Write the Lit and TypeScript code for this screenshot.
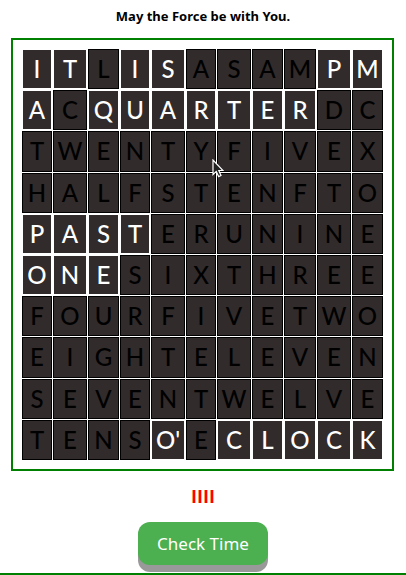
import { LitElement, html, css } from "lit";
import { customElement } from "lit/decorators.js";
import { classMap } from "lit/directives/class-map.js";

// One string per row; "*" after a letter marks a lit tile.
const ROWS = [
  "I* T* L I* S* A S A M P* M*",
  "A* C Q* U* A* R* T* E* R* D C",
  "T W E N T Y F I V E X",
  "H A L F S T E N F T O",
  "P* A* S* T* E R U N I N E",
  "O* N* E* S I X T H R E E",
  "F O U R F I V E T W O",
  "E I G H T E L E V E N",
  "S E V E N T W E L V E",
  "T E N S O'* E C* L* O* C* K*",
].map((row) =>
  row.split(" ").map((t) => ({ text: t.replace("*", ""), lit: t.endsWith("*") }))
);

@customElement("word-clock")
export class WordClock extends LitElement {
  static styles = css`
    :host {
      display: block;
      position: relative;
      border: 2px solid #008000;
      padding: 8px;
    }
    .grid {
      width: 100%;
      height: 413px;
      table-layout: fixed;
      border-collapse: separate;
      border-spacing: 1px;
    }
    .medium { width: 31px; }
    .wide { width: 34px; }
    .narrow { width: 30px; }
    .broad { width: 32px; }
    .tile {
      box-sizing: border-box;
      padding: 0;
      border: 1px solid #000;
      background: #312b2b;
      color: #000;
      font: 500 24px/30px Lato, sans-serif;
      text-align: center;
      vertical-align: middle;
    }
    .lit {
      border-color: #fff;
      color: #fff;
    }
    .pointer {
      position: absolute;
      left: 199px;
      top: 119px;
      width: 12px;
      height: 19px;
    }
  `;

  render() {
    const cols = ["narrow", "wide", "medium", "narrow", "wide", "narrow", "wide", "medium", "broad", "wide", "medium"];
    return html`
      <table class="grid">
        <colgroup>${cols.map((c) => html`<col class=${c} />`)}</colgroup>
        <tbody>
          ${ROWS.map(
            (row) => html`<tr>
              ${row.map((t) => html`<td class=${classMap({ tile: true, lit: t.lit })}>${t.text}</td>`)}
            </tr>`
          )}
        </tbody>
      </table>
      <svg class="pointer" viewBox="0 0 12 19" aria-hidden="true">
        <path d="M1 1V15.5L4.3 12.4L6.6 17.6L9 16.5L6.8 11.5H11Z" fill="#222" stroke="#fff" stroke-width="1.2" />
      </svg>
    `;
  }
}

@customElement("app-root")
export class AppRoot extends LitElement {
  static styles = css`
    :host {
      display: block;
      background: #fff;
      font-family: "Noto Sans", sans-serif;
    }
    .page {
      display: flex;
      flex-direction: column;
      border-bottom: 2px solid #008000;
    }
    .motto {
      margin: 6px 0 12px;
      color: #000;
      font: 700 13px/20px "Noto Sans", sans-serif;
      text-align: center;
    }
    .clock {
      margin: 0 12px 0 11px;
    }
    .tally {
      margin: 13px 0 14px;
      color: #f00;
      font: 700 18px/24px "Open Sans", sans-serif;
      text-align: center;
    }
    .check {
      align-self: center;
      margin: 0 0 8px;
      padding: 10px 19px;
      border: 0;
      border-radius: 12px;
      background: #4caf50;
      box-shadow: 0 7px #999;
      color: #fff;
      font: 400 17px/23px "Noto Sans", sans-serif;
      cursor: pointer;
    }
  `;

  render() {
    return html`
      <main class="page">
        <h1 class="motto">May the Force be with You.</h1>
        <word-clock class="clock"></word-clock>
        <p class="tally">IIII</p>
        <button class="check" type="button">Check Time</button>
      </main>
    `;
  }
}
